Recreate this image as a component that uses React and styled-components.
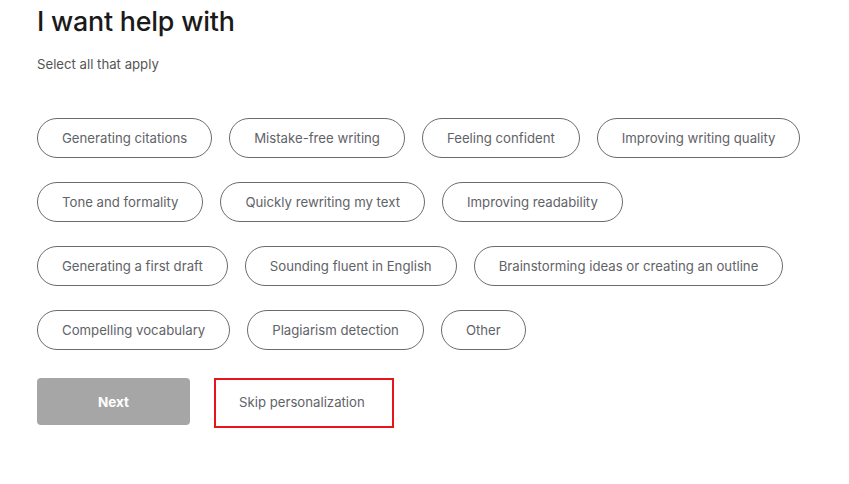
import React from 'react';
import styled, { createGlobalStyle } from 'styled-components';

const GlobalStyle = createGlobalStyle`
  body {
    margin: 0;
    background: #fff;
    font-family: Inter, "Open Sans", sans-serif;
  }
`;

const Page = styled.div`
  padding: 0 37px;
`;

const Title = styled.h1`
  margin: 0;
  padding-top: 4px;
  font-size: 26.8px;
  line-height: 34px;
  font-weight: 500;
  color: #1a1a1a;
  letter-spacing: -0.2px;
`;

const Subtitle = styled.p`
  margin: 16px 0 0;
  font-size: 13.2px;
  line-height: 20px;
  color: #555;
`;

const Chips = styled.div`
  display: flex;
  flex-direction: column;
  gap: 24px;
  margin-top: 44px;
`;

const Row = styled.div`
  display: flex;
  gap: 17px;
`;

const Chip = styled.button`
  flex-shrink: 0;
  white-space: nowrap;
  height: 40px;
  padding: 0 24px;
  border: 1px solid #6b6b6b;
  border-radius: 20px;
  background: #fff;
  color: #5f6368;
  font-family: inherit;
  font-size: 13.2px;
  cursor: pointer;
`;

const Actions = styled.div`
  display: flex;
  align-items: flex-start;
  gap: 24px;
  margin-top: 28px;
`;

const NextButton = styled.button`
  width: 153px;
  height: 47px;
  border: none;
  border-radius: 4px;
  background: #a6a6a6;
  color: #fff;
  font-family: inherit;
  font-size: 13.5px;
  font-weight: 700;
`;

const SkipButton = styled.button`
  box-sizing: border-box;
  width: 180px;
  height: 50px;
  border: 2.5px solid #e8141c;
  background: #fff;
  color: #5f6368;
  font-family: inherit;
  font-size: 13.2px;
  text-align: left;
  padding: 0 0 3px 23px;
`;

const rows = [
  ['Generating citations', 'Mistake-free writing', 'Feeling confident', 'Improving writing quality'],
  ['Tone and formality', 'Quickly rewriting my text', 'Improving readability'],
  ['Generating a first draft', 'Sounding fluent in English', 'Brainstorming ideas or creating an outline'],
  ['Compelling vocabulary', 'Plagiarism detection', 'Other'],
];

const App = () => (
  <Page>
    <GlobalStyle />
    <Title>I want help with</Title>
    <Subtitle>Select all that apply</Subtitle>
    <Chips>
      {rows.map((row, i) => (
        <Row key={i}>
          {row.map((label) => (
            <Chip key={label}>{label}</Chip>
          ))}
        </Row>
      ))}
    </Chips>
    <Actions>
      <NextButton>Next</NextButton>
      <SkipButton>Skip personalization</SkipButton>
    </Actions>
  </Page>
);

export default App;
